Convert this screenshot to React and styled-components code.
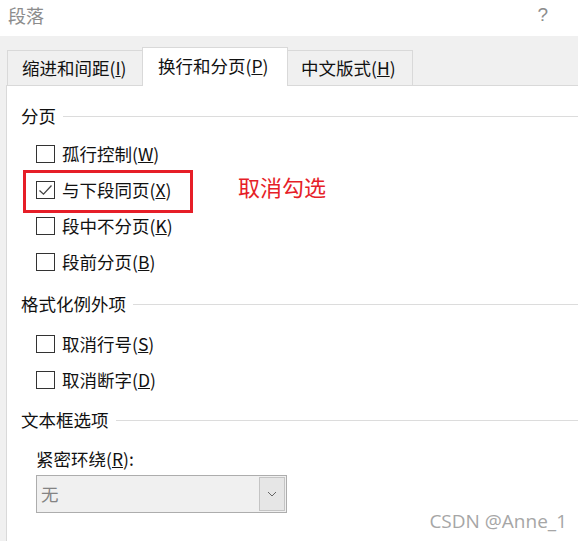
import React from "react";
import styled, { createGlobalStyle } from "styled-components";

const Global = createGlobalStyle`
  html, body { margin: 0; padding: 0; background: #f0f0f0; }
  body { width: 578px; height: 541px; overflow: hidden; }
  * { box-sizing: border-box; }
`;

const FONT = `"Noto Sans CJK SC", "Microsoft YaHei", sans-serif`;

const Dialog = styled.div`
  position: relative;
  width: 578px;
  height: 541px;
  display: flex;
  flex-direction: column;
  background: #f0f0f0;
  font-family: ${FONT};
  color: #111;
  overflow: hidden;
`;

const TitleBar = styled.div`
  height: 36px;
  flex: none;
  background: #fff;
  display: flex;
  align-items: center;
  justify-content: space-between;
  padding: 0 30px 0 8px;
`;

const Title = styled.span`
  font-size: 18px;
  line-height: 24px;
  color: #8c8c8c;
  margin-top: -6px;
`;

const Help = styled.span`
  font-family: "Liberation Sans", sans-serif;
  font-size: 19px;
  color: #8c8c8c;
  margin-top: -6px;
`;

const Body = styled.div`
  flex: 1;
  display: flex;
  flex-direction: column;
  padding: 12px 0 0 6px;
`;

const TabStrip = styled.div`
  display: flex;
  align-items: flex-end;
  padding-left: 1px;
  height: 38px;
  position: relative;
  z-index: 1;
  margin-bottom: -1px;
`;

const Tab = styled.div`
  width: ${(p) => p.$w}px;
  height: ${(p) => (p.$active ? 39 : 36)}px;
  margin-left: ${(p) => (p.$first ? 0 : -1)}px;
  border: 1px solid #d9d9d9;
  border-bottom: ${(p) => (p.$active ? "none" : "1px solid #d9d9d9")};
  background: ${(p) => (p.$active ? "#fff" : "#f0f0f0")};
  position: relative;
  z-index: ${(p) => (p.$active ? 2 : 1)};
  display: flex;
  align-items: center;
  padding-left: ${(p) => p.$pad}px;
  padding-bottom: ${(p) => (p.$active ? 3 : 1)}px;
  font-size: 17.5px;
  line-height: 22px;
  white-space: nowrap;
  color: #111;
`;

const Panel = styled.div`
  flex: 1;
  background: #fff;
  border-left: 1px solid #d9d9d9;
  border-top: 1px solid #d9d9d9;
  padding: 18px 0 0 14px;
  display: flex;
  flex-direction: column;
`;

const Heading = styled.div`
  height: 24px;
  display: flex;
  align-items: center;
  gap: 7px;
  margin-top: ${(p) => p.$mt || 0}px;
  font-size: 17.5px;
  line-height: 24px;
  white-space: nowrap;
`;

const Rule = styled.div`
  flex: 1;
  height: 1px;
  background: #dcdcdc;
`;

const Group = styled.div`
  display: flex;
  flex-direction: column;
  padding-left: 15px;
  margin-top: ${(p) => p.$mt || 0}px;
`;

const Row = styled.div`
  position: relative;
  height: 36px;
  display: flex;
  align-items: center;
  gap: 7px;
  font-size: 17.5px;
  line-height: 22px;
  white-space: nowrap;
`;

const Box = styled.span`
  width: 19px;
  height: 18px;
  flex: none;
  border: 1px solid #333;
  background: #fff;
  display: flex;
  align-items: center;
  justify-content: center;
`;

const Highlight = styled.div`
  position: absolute;
  left: -13px;
  top: -2px;
  width: 170px;
  height: 43px;
  border: 3px solid #e61e28;
  pointer-events: none;
`;

const Note = styled.div`
  position: absolute;
  left: 202px;
  top: 0px;
  font-size: 22px;
  line-height: 28px;
  color: #e61e28;
`;

const FieldLabel = styled.div`
  height: 24px;
  margin-top: 15px;
  display: flex;
  align-items: center;
  font-size: 17.5px;
  line-height: 24px;
  white-space: nowrap;
`;

const Select = styled.div`
  margin-top: 4px;
  width: 251px;
  height: 38px;
  border: 1px solid #adadad;
  background: #f0f0f0;
  display: flex;
  align-items: center;
  justify-content: space-between;
  padding: 0 1px 0 4px;
`;

const SelectValue = styled.span`
  font-size: 17.5px;
  line-height: 22px;
  color: #838383;
`;

const SelectButton = styled.span`
  width: 26px;
  height: 34px;
  border: 1px solid #c4c4c4;
  background: #e6e6e6;
  display: flex;
  align-items: center;
  justify-content: center;
`;

const Watermark = styled.div`
  position: absolute;
  right: 11px;
  bottom: 8px;
  font-family: "Open Sans", "Noto Sans", sans-serif;
  font-size: 19px;
  line-height: 24px;
  color: #a6a6a6;
`;

const Check = () => (
  <svg width="15" height="12" viewBox="0 0 15 12">
    <path d="M1.5 6.5 L5.5 10.2 L13.5 1.5" fill="none" stroke="#444" strokeWidth="1.3" />
  </svg>
);

const Chevron = () => (
  <svg width="10" height="6" viewBox="0 0 10 6">
    <path d="M1 1 L5 5 L9 1" fill="none" stroke="#666" strokeWidth="1" />
  </svg>
);

const Label = ({ text, k }) => (
  <span>
    {text}(<u>{k}</u>)
  </span>
);

const CheckRow = ({ text, k, checked, children }) => (
  <Row>
    <Box>{checked && <Check />}</Box>
    <Label text={text} k={k} />
    {children}
  </Row>
);

export default function App() {
  return (
    <Dialog>
      <Global />
      <TitleBar>
        <Title>段落</Title>
        <Help>?</Help>
      </TitleBar>
      <Body>
        <TabStrip>
          <Tab $first $w={136} $pad={14}>
            <Label text="缩进和间距" k="I" />
          </Tab>
          <Tab $active $w={146} $pad={15}>
            <Label text="换行和分页" k="P" />
          </Tab>
          <Tab $w={126} $pad={13}>
            <Label text="中文版式" k="H" />
          </Tab>
        </TabStrip>
        <Panel>
          <Heading>
            分页
            <Rule />
          </Heading>
          <Group $mt={8}>
            <CheckRow text="孤行控制" k="W" />
            <CheckRow text="与下段同页" k="X" checked>
              <Highlight />
              <Note>取消勾选</Note>
            </CheckRow>
            <CheckRow text="段中不分页" k="K" />
            <CheckRow text="段前分页" k="B" />
          </Group>
          <Heading $mt={12}>
            格式化例外项
            <Rule />
          </Heading>
          <Group $mt={10}>
            <CheckRow text="取消行号" k="S" />
            <CheckRow text="取消断字" k="D" />
          </Group>
          <Heading $mt={10}>
            文本框选项
            <Rule />
          </Heading>
          <Group>
            <FieldLabel>
              <span>
                紧密环绕(<u>R</u>):
              </span>
            </FieldLabel>
            <Select>
              <SelectValue>无</SelectValue>
              <SelectButton>
                <Chevron />
              </SelectButton>
            </Select>
          </Group>
        </Panel>
      </Body>
      <Watermark>CSDN @Anne_1</Watermark>
    </Dialog>
  );
}
